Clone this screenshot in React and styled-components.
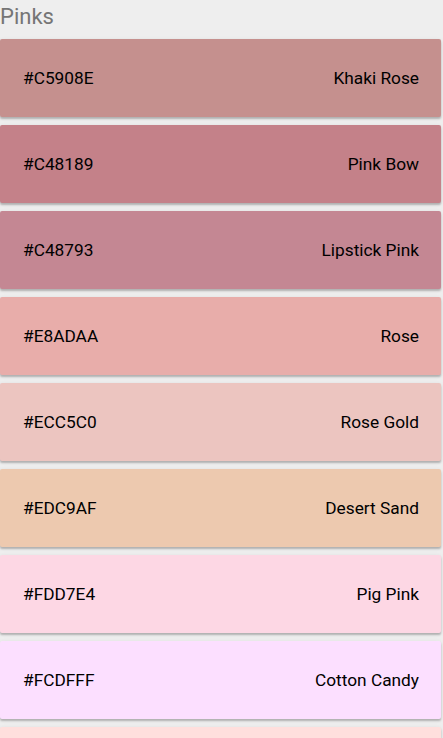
import React from 'react';
import styled, { createGlobalStyle } from 'styled-components';

const GlobalStyle = createGlobalStyle`
    html, body {
        margin: 0;
        padding: 0;
        background-color: #eeeeee;
        font-family: Roboto, "Liberation Sans", sans-serif;
        overflow: hidden;
    }
`;

const Page = styled.div`
    display: flex;
    flex-direction: column;
    height: 738px;
    overflow: hidden;
`;

const Heading = styled.div`
    flex: none;
    height: 39px;
    font-size: 22px;
    line-height: 34px;
    color: #757575;
`;

const List = styled.div`
    flex: none;
    display: flex;
    flex-direction: column;
    gap: 8px;
    padding-right: 2px;
`;

const Card = styled.div`
    flex: none;
    height: 78px;
    background-color: ${({ $color }) => $color};
    border-radius: 2px;
    box-shadow: 0 2px 2px rgba(0, 0, 0, 0.22), 0 1px 4px rgba(0, 0, 0, 0.08);
    display: flex;
    align-items: center;
    justify-content: space-between;
    padding: 0 22px 0 23px;
    font-size: 17.3px;
    color: #000;
`;

const pinks = [
    { hex: '#C5908E', name: 'Khaki Rose' },
    { hex: '#C48189', name: 'Pink Bow' },
    { hex: '#C48793', name: 'Lipstick Pink' },
    { hex: '#E8ADAA', name: 'Rose' },
    { hex: '#ECC5C0', name: 'Rose Gold' },
    { hex: '#EDC9AF', name: 'Desert Sand' },
    { hex: '#FDD7E4', name: 'Pig Pink' },
    { hex: '#FCDFFF', name: 'Cotton Candy' },
    { hex: '#FFDFDD', name: 'Misty Rose' },
];

function App() {
    return (
        <Page>
            <GlobalStyle />
            <Heading>Pinks</Heading>
            <List>
                {pinks.map((p) => (
                    <Card key={p.hex} $color={p.hex}>
                        <span>{p.hex}</span>
                        <span>{p.name}</span>
                    </Card>
                ))}
            </List>
        </Page>
    );
}

export default App;
